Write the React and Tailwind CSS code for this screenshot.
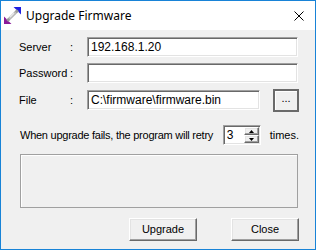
const sunken =
  "bg-white border border-t-[#a0a0a0] border-l-[#a0a0a0] border-r-white border-b-white shadow-[inset_1px_1px_0_#696969,inset_-1px_-1px_0_#e3e3e3]";
const raised =
  "bg-[#f0f0f0] border border-t-white border-l-white border-r-[#696969] border-b-[#696969] shadow-[inset_-1px_-1px_0_#a0a0a0,inset_1px_1px_0_#e3e3e3]";

const AppIcon = () => (
  <svg width="17" height="17" viewBox="0 0 16 16">
    <polygon points="9,0 16,0 16,7" fill="#1f1fe0" />
    <polygon points="0,9 0,16 7,16" fill="#8a1a9a" />
    <polygon points="4,10 10,4 12,6 6,12" fill="#b8b8b8" />
    <polygon points="5,9 9,5 10,6 6,10" fill="#e8e8e8" />
    <polygon points="2,12 4,10 6,12 4,14" fill="#9a9a9a" />
    <polygon points="10,4 12,2 14,4 12,6" fill="#9a9a9a" />
  </svg>
);

const Row = ({ label, children }) => (
  <div className="flex items-center h-[20px]">
    <span className="w-[51px] whitespace-nowrap">{label}</span>
    <span className="w-[17px]">:</span>
    {children}
  </div>
);

export default function App() {
  return (
    <div
      className="w-[316px] h-[250px] border border-[#1883d7] flex flex-col text-[11px] text-black overflow-hidden"
      style={{ fontFamily: '"Liberation Sans", Arial, sans-serif' }}
    >
      <div className="h-[29px] bg-white flex items-center shrink-0">
        <div className="ml-[3px] mr-[5px]">
          <AppIcon />
        </div>
        <span
          className="text-[12px] text-black"
          style={{ fontFamily: '"Noto Sans", "Open Sans", sans-serif' }}
        >
          Upgrade Firmware
        </span>
        <svg className="ml-auto mr-[11px]" width="10" height="10" viewBox="0 0 10 10">
          <path d="M0.5 0.5 L9.5 9.5 M9.5 0.5 L0.5 9.5" stroke="#000" strokeWidth="1" />
        </svg>
      </div>

      <div className="flex-1 bg-[#f0f0f0] pl-[18px] pr-[16px] pt-[7px] flex flex-col">
        <div className="flex flex-col gap-[6px]">
          <Row label="Server">
            <div className={`${sunken} w-[211px] h-[20px] flex items-center pl-[3px] text-[12px]`}>
              192.168.1.20
            </div>
          </Row>
          <Row label="Password">
            <div className={`${sunken} w-[211px] h-[20px]`} />
          </Row>
          <div className="flex items-center h-[22px]">
            <span className="w-[51px]">File</span>
            <span className="w-[17px]">:</span>
            <div className={`${sunken} w-[173px] h-[20px] flex items-center pl-[3px] text-[12px]`}>
              C:\firmware\firmware.bin
            </div>
            <div className="ml-[13px] w-[26px] h-[23px] border-2 border-[#6a6a6a] bg-[#f0f0f0] shadow-[inset_1px_1px_0_#fff] flex items-center justify-center pb-[3px]">
              ...
            </div>
          </div>
        </div>

        <div className="flex items-center mt-[14px] h-[20px]">
          <span className="w-[204px] pl-[1px] whitespace-nowrap tracking-[-0.25px]">
            When upgrade fails, the program will retry
          </span>
          <div className={`${sunken} w-[38px] h-[20px] flex items-center`}>
            <span className="pl-[3px] flex-1 text-[12px]">3</span>
            <div className="w-[16px] h-full flex flex-col pr-[1px] py-[1px]">
              <div className={`${raised} flex-1 flex items-center justify-center`}>
                <svg width="5" height="3" viewBox="0 0 5 3">
                  <polygon points="2.5,0 5,3 0,3" fill="#000" />
                </svg>
              </div>
              <div className={`${raised} flex-1 flex items-center justify-center`}>
                <svg width="5" height="3" viewBox="0 0 5 3">
                  <polygon points="0,0 5,0 2.5,3" fill="#000" />
                </svg>
              </div>
            </div>
          </div>
          <span className="ml-[9px]">times.</span>
        </div>

        <div className="mt-[9px] ml-[1px] w-[278px] h-[54px] border border-[#a0a0a0] shadow-[inset_1px_1px_0_#fff]" />

        <div className="mt-[10px] flex justify-end gap-[34px]">
          <div className={`${raised} w-[68px] h-[23px] flex items-center justify-center`}>Upgrade</div>
          <div className={`${raised} w-[68px] h-[23px] flex items-center justify-center`}>Close</div>
        </div>
      </div>
    </div>
  );
}
